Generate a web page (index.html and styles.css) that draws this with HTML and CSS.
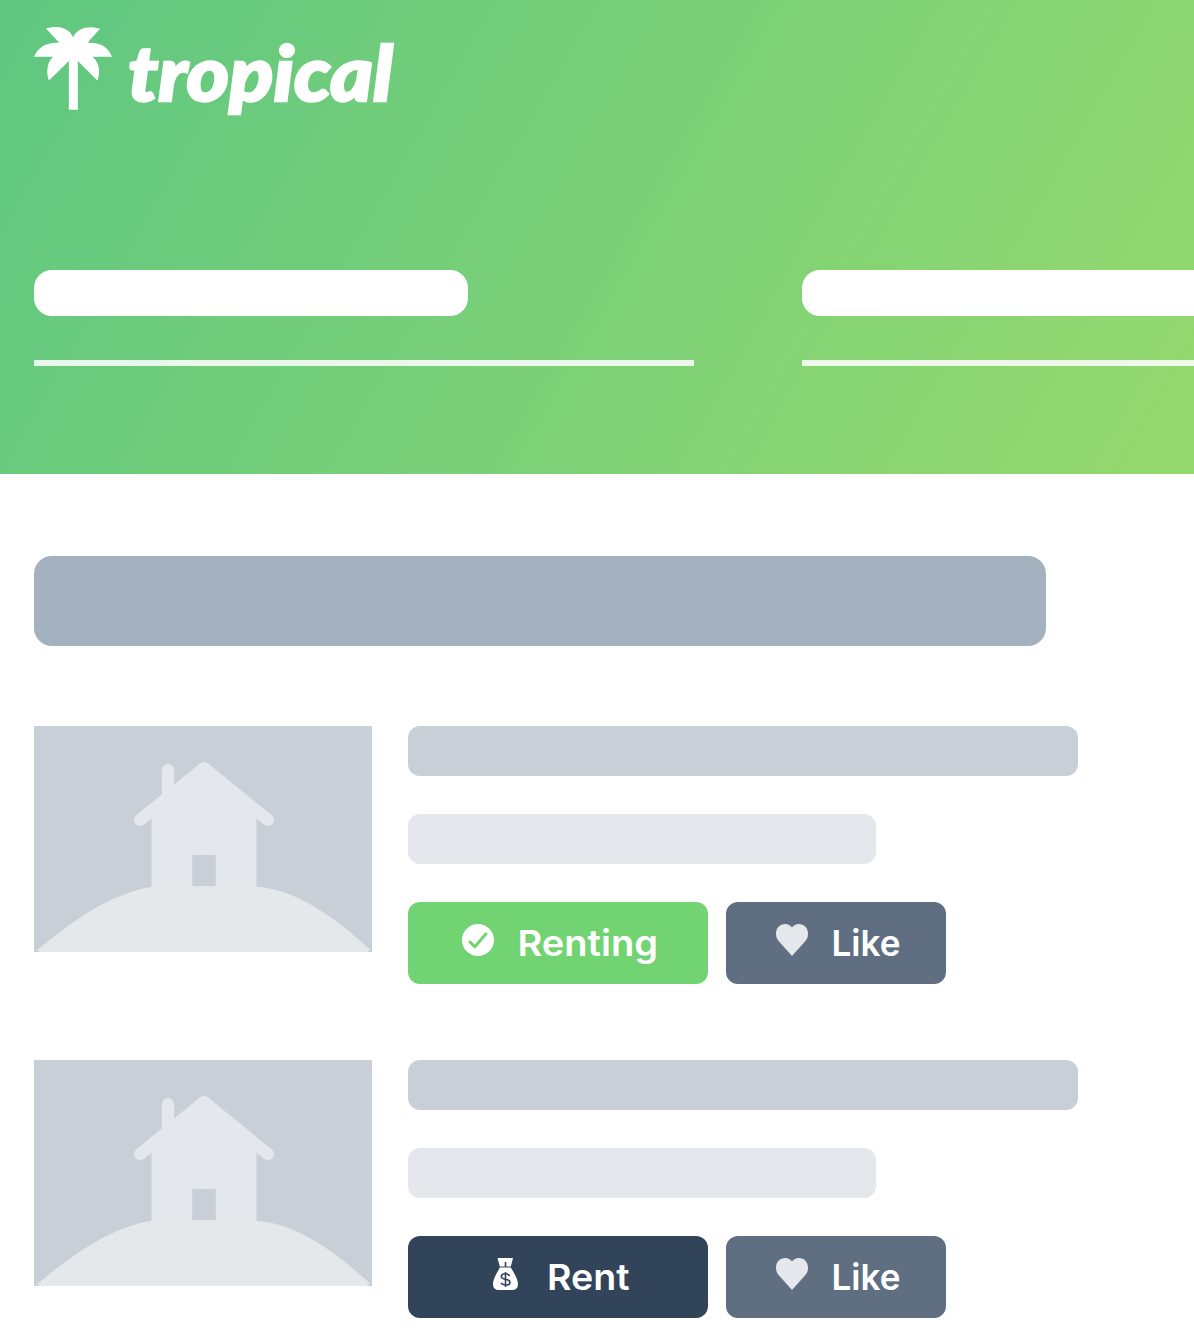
FILE: index.html
```html
<!DOCTYPE html>
<html lang="en">
<head>
<meta charset="utf-8">
<title>tropical</title>
<link rel="stylesheet" href="styles.css">
</head>
<body>
<svg width="0" height="0" class="symbols" aria-hidden="true">
  <symbol id="house" viewBox="0 0 338 226">
    <path class="hill" d="M3 224.500Q68 168 118 160.700L158 162V160H182V162L222 160.700Q271 163 336 223.500L333 226H6Z"/>
    <path class="house" d="M117.500 91L170 46L222.500 91V163H182V160H158V163H117.500Z"/>
    <path class="roof" d="M106 94L170 42L234 94M134 44V74"/>
    <path class="door" d="M158.300 129H181.700V160H158.300Z"/>
  </symbol>
  <symbol id="heart" viewBox="0 0 32 32">
    <path fill="#e4e8ed" d="M16 32L3 17.500C1 15.300 0 13 0 9.500C0 4 4 0 9 0C12 0 14.500 1.200 16 3.500C17.500 1.200 20 0 23 0C28 0 32 4 32 9.500C32 13 31 15.300 29 17.500Z"/>
  </symbol>
</svg>
<header class="hero">
  <div class="brand">
    <svg class="palm" viewBox="42 36 235 249"><path fill="#fff" d="M78 40C105 32 144 33 160 66C176 34 212 32 241 41L203 83C240 80 265 95 277 125H219C240 145 242 172 233 197L174 138V285H147V138L87 197C77 170 82 142 99 125H42C55 95 82 80 118 83Z"/></svg>
    <svg class="wordmark" viewBox="0 0 270 100"><text x="0" y="73.500" textLength="265" lengthAdjust="spacingAndGlyphs">tropical</text></svg>
  </div>
  <div class="fields">
    <div class="field"><div class="field-label"></div></div>
    <div class="field"><div class="field-label"></div></div>
  </div>
</header>
<main class="content">
  <div class="heading"></div>
  <article class="listing">
    <svg class="photo"><use href="#house"/></svg>
    <div class="details">
      <div class="title"></div>
      <div class="subtitle"></div>
      <div class="actions">
        <button class="button renting">
          <svg class="icon" viewBox="0 0 32 32"><circle cx="16" cy="16" r="16" fill="#fff"/><path d="M8 18L12.800 22.700L24 9.800" fill="none" stroke="#72d372" stroke-width="3" stroke-linecap="round" stroke-linejoin="round"/></svg>
          <svg class="label" width="144" height="50"><text x="0.500" y="33" textLength="140.500" lengthAdjust="spacingAndGlyphs">Renting</text></svg>
        </button>
        <button class="button like">
          <svg class="icon"><use href="#heart"/></svg>
          <svg class="label" width="72" height="50"><text x="0.500" y="33" textLength="69" lengthAdjust="spacingAndGlyphs">Like</text></svg>
        </button>
      </div>
    </div>
  </article>
  <article class="listing">
    <svg class="photo"><use href="#house"/></svg>
    <div class="details">
      <div class="title"></div>
      <div class="subtitle"></div>
      <div class="actions">
        <button class="button rent">
          <svg class="icon" viewBox="0 0 32 32"><path fill="#fff" d="M7.500 0H23L20.800 8.500H9.800ZM9.800 9.500H20.800C23.500 14 28 21 28 26Q28 32 22 32H9Q3 32 3 26C3 21 7.500 14 9.800 9.500Z"/><path d="M15.500 4V9M15.500 14V29M19.700 18C18 14.800 11.300 15 11.300 18.500C11.300 22.700 20 20 20 24.200C20 27.800 13.500 27.800 10.800 25" fill="none" stroke="#32445a" stroke-width="1.600"/></svg>
          <svg class="label" width="86" height="50"><text x="2" y="33" textLength="82.500" lengthAdjust="spacingAndGlyphs">Rent</text></svg>
        </button>
        <button class="button like">
          <svg class="icon"><use href="#heart"/></svg>
          <svg class="label" width="72" height="50"><text x="0.500" y="33" textLength="69" lengthAdjust="spacingAndGlyphs">Like</text></svg>
        </button>
      </div>
    </div>
  </article>
</main>
</body>
</html>
```
FILE: styles.css
```css
* { box-sizing: border-box; }
html { overflow: hidden; }
body { margin: 0; background: #fff; font-family: Inter, sans-serif; }
.symbols { display: block; }
.hero { height: 474px; padding: 27px 0 0 34px; overflow: hidden; background: linear-gradient(120deg, #5fc781 0%, #96d96e 100%); }
.brand { display: flex; height: 243px; }
.palm { width: 78px; height: 83px; flex: none; }
.wordmark { width: 270px; height: 100px; margin-left: 16px; overflow: visible; }
.wordmark text { font: italic 900 76px Lato, sans-serif; fill: #fff; stroke: #fff; stroke-width: 2.4px; }
.fields { display: flex; gap: 108px; }
.field { flex: 0 0 660px; height: 96px; border-bottom: 6px solid rgba(255, 255, 255, .85); }
.field-label { width: 434px; height: 46px; border-radius: 18px; background: #fff; }
.content { padding: 82px 34px 0; }
.heading { width: 1012px; height: 90px; margin-bottom: 80px; border-radius: 18px; background: #a4b1be; }
.listing { display: flex; gap: 36px; height: 258px; margin-bottom: 76px; }
.photo { width: 338px; height: 226px; flex: none; background: #c8cfd7; }
.house { fill: #e4e8ed; }
.roof { fill: none; stroke: #e4e8ed; stroke-width: 12px; stroke-linecap: round; stroke-linejoin: round; }
.hill { fill: #e4e8eb; }
.door { fill: #c8cfd7; }
.details { display: flex; flex-direction: column; gap: 38px; }
.title { width: 670px; height: 50px; border-radius: 12px; background: #c8cfd7; }
.subtitle { width: 468px; height: 50px; border-radius: 12px; background: #e4e8ed; }
.actions { display: flex; gap: 18px; }
.button { display: flex; align-items: flex-start; height: 82px; padding: 21px 0 0; border: 0; border-radius: 12px; color: #fff; }
.renting { width: 300px; padding-left: 54px; background: #72d372; }
.rent { width: 300px; padding-left: 82px; background: #32445a; }
.like { width: 220px; padding-left: 50px; background: #5f6f81; }
.icon { width: 32px; height: 32px; margin-top: 1px; margin-right: 23px; flex: none; }
.label { flex: none; overflow: visible; }
.label text { font: 600 36px Inter, sans-serif; fill: #fff; }
```
